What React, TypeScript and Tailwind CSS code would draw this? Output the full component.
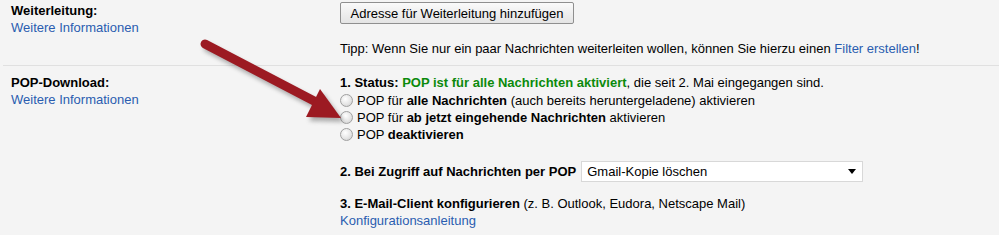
import React from 'react'

const LINK = 'text-[#2a5db0]'

function Radio() {
  return (
    <span className="inline-block w-[13px] h-[13px] rounded-full border border-[#a0a0a0] bg-[radial-gradient(circle_at_40%_35%,#ffffff_0%,#e6e6e6_55%,#c8c8c8_100%)] mr-[4px] shrink-0" />
  )
}

function Arrow() {
  return (
    <svg className="absolute left-0 top-0 pointer-events-none" width="999" height="235">
      <defs>
        <filter id="sh" x="-20%" y="-20%" width="140%" height="140%">
          <feGaussianBlur stdDeviation="2.2" />
        </filter>
      </defs>
      <g transform="translate(3 4)" opacity="0.45" filter="url(#sh)">
        <line x1="205" y1="44" x2="316" y2="102" stroke="#555" strokeWidth="9" strokeLinecap="round" />
        <polygon points="341,118 320,89 306,117" fill="#555" />
      </g>
      <line x1="205" y1="44" x2="316" y2="102" stroke="#9c1a22" strokeWidth="9" strokeLinecap="round" />
      <polygon points="341,118 320,89 306,117" fill="#9c1a22" />
    </svg>
  )
}

export default function App() {
  return (
    <div className="relative w-[999px] h-[235px] overflow-hidden bg-[#f4f4f4] text-[13px] leading-[17px] text-black font-['Liberation_Sans',Arial,sans-serif]">
      <div className="ml-[3px] flex border-b border-[#e0e0e0] h-[66px]">
        <div className="w-[337px] pl-[8px] pt-[2px]">
          <div className="font-bold">Weiterleitung:</div>
          <div className={LINK}>Weitere Informationen</div>
        </div>
        <div className="pt-[2px]">
          <button className="h-[22px] w-[234px] rounded-[2px] border border-[#8f8f8f] bg-[linear-gradient(#fafafa,#e4e4e4)] text-[13px] text-black">
            Adresse für Weiterleitung hinzufügen
          </button>
          <div className="mt-[16px]">
            Tipp: Wenn Sie nur ein paar Nachrichten weiterleiten wollen, können Sie hierzu einen{' '}
            <span className={LINK}>Filter erstellen</span>!
          </div>
        </div>
      </div>
      <div className="ml-[3px] flex">
        <div className="w-[337px] pl-[8px] pt-[8px]">
          <div className="font-bold">POP-Download:</div>
          <div className={LINK}>Weitere Informationen</div>
        </div>
        <div className="pt-[8px]">
          <div>
            <b>1. Status: </b>
            <b className="text-[#0b8a0b]">POP ist für alle Nachrichten aktiviert</b>, die seit 2. Mai eingegangen sind.
          </div>
          <div className="mt-[1px] flex items-center h-[17px]">
            <Radio />
            <span>
              POP für <b>alle Nachrichten</b> (auch bereits heruntergeladene) aktivieren
            </span>
          </div>
          <div className="flex items-center h-[17px]">
            <Radio />
            <span>
              POP für <b>ab jetzt eingehende Nachrichten</b> aktivieren
            </span>
          </div>
          <div className="flex items-center h-[17px]">
            <Radio />
            <span>
              POP <b>deaktivieren</b>
            </span>
          </div>
          <div className="mt-[18px] flex items-center">
            <b>2. Bei Zugriff auf Nachrichten per POP</b>
            <div className="ml-[5px] flex items-center justify-between w-[282px] h-[21px] bg-white border border-[#d8d8d8] pl-[5px] pr-[6px]">
              <span>Gmail-Kopie löschen</span>
              <span className="w-0 h-0 border-l-[4px] border-r-[4px] border-t-[5px] border-l-transparent border-r-transparent border-t-black" />
            </div>
          </div>
          <div className="mt-[13px]">
            <b>3. E-Mail-Client konfigurieren</b> (z. B. Outlook, Eudora, Netscape Mail)
          </div>
          <div className={LINK}>Konfigurationsanleitung</div>
        </div>
      </div>
      <Arrow />
    </div>
  )
}
